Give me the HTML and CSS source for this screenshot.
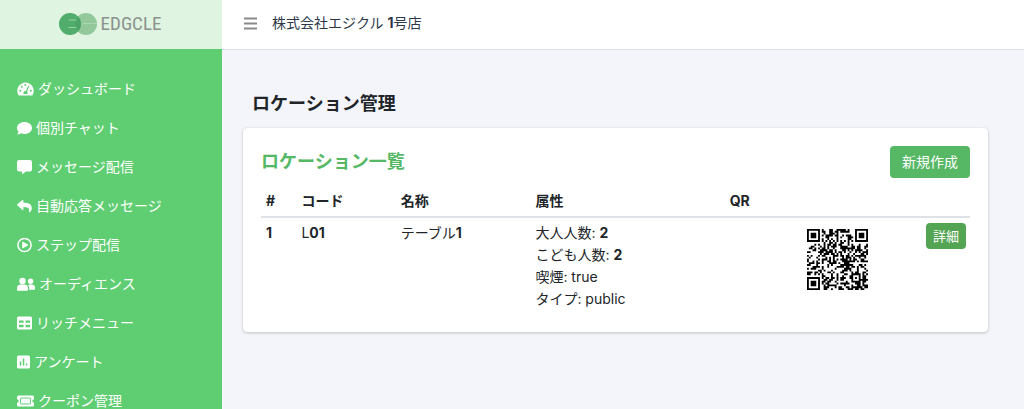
FILE: index.html
```html
<!DOCTYPE html>
<html lang="ja">
<head>
<meta charset="utf-8">
<meta name="viewport" content="width=device-width, initial-scale=1">
<title>ロケーション管理</title>
<link rel="stylesheet" href="styles.css">
</head>
<body>
<div class="app">
  <aside class="sidebar">
    <a class="brand" href="#" aria-label="EDGCLE">
      <svg class="brand-mark" viewBox="0 0 40 24" aria-hidden="true">
        <circle cx="28" cy="12" r="11" fill="#93c89b"/>
        <circle cx="12" cy="12" r="11" fill="#50ad6b"/>
        <path d="M20 4.500A11 11 0 0 1 20 19.500A11 11 0 0 1 20 4.500Z" fill="#4ba467"/>
        <path d="M10.500 8h8M10.500 15.500h8M25 11.500h14" stroke="#b4dfbc" stroke-width=".7" fill="none"/>
      </svg>
      <span class="brand-name">EDGCLE</span>
    </a>
    <nav class="menu">
      <a class="menu-item" href="#"><svg class="icon w17" viewBox="0 0 17 16"><path fill="#fff" d="M8.500 1.500A8.300 8.300 0 0 0 1.400 14q.3.500.9.500h12.400q.6 0 .9-.5A8.300 8.300 0 0 0 8.500 1.500Z"/><g fill="#5fcd72"><circle cx="8.300" cy="4" r="1"/><circle cx="4.600" cy="5.800" r="1"/><circle cx="3.200" cy="9.800" r="1"/><circle cx="13.800" cy="9.800" r="1"/><path d="m11.400 4.400 1 .4-2.300 5.600a2 2 0 0 1 .2 2.600H6.700a2 2 0 0 1 2.200-3Z"/></g></svg>ダッシュボード</a>
      <a class="menu-item" href="#"><svg class="icon w15" viewBox="0 0 15 16"><path fill="#fff" d="M7.500 2C3.400 2 0 4.600 0 8c0 1.400.6 2.700 1.600 3.700C1.400 12.700.8 13.500.1 14.200c0 .3.100.4.400.3 1.500-.1 2.800-.6 3.800-1.200 1 .4 2.100.6 3.200.6 4.100 0 7.500-2.600 7.500-6S11.600 2 7.500 2Z"/></svg>個別チャット</a>
      <a class="menu-item" href="#"><svg class="icon w15" viewBox="0 0 15 16"><path fill="#fff" d="M2 1h11a2 2 0 0 1 2 2v7.500a2 2 0 0 1-2 2H9L5.600 15q-.6.400-.6-.3v-2.200H2a2 2 0 0 1-2-2V3a2 2 0 0 1 2-2Z"/></svg>メッセージ配信</a>
      <a class="menu-item" href="#"><svg class="icon w15" viewBox="0 0 15 16"><path fill="#fff" d="M.3 6.300 5.400 2c.4-.4 1-.1 1 .4v2.300c4.700.1 8.400 1 8.400 5.500 0 1.800-1 3.300-2.300 4.100-.4.300-.9 0-.7-.5 1.200-3.600-.5-4.700-5.400-4.800v2.500c0 .6-.6.900-1 .5L.3 7.300q-.5-.5 0-1Z"/></svg>自動応答メッセージ</a>
      <a class="menu-item" href="#"><svg class="icon w15" viewBox="0 0 15 16"><circle cx="7.500" cy="8" r="6.600" fill="none" stroke="#fff" stroke-width="1.500"/><path fill="#fff" d="M5.200 5.200q0-.8.700-.5l5 2.800q.7.500 0 1l-5 2.800q-.7.300-.7-.5Z"/></svg>ステップ配信</a>
      <a class="menu-item" href="#"><svg class="icon w18" viewBox="0 0 18 16"><g fill="#fff"><circle cx="5.500" cy="5" r="3.200"/><path d="M0 14v-1.500a4 4 0 0 1 4-4h3a4 4 0 0 1 4 4V14q0 .7-.7.700H.7Q0 14.700 0 14Z"/><circle cx="13.600" cy="5.200" r="2.700"/><path d="M11 8.900q.8-.5 2-.4h1.600A3.400 3.400 0 0 1 18 12v1q0 .8-.8.800h-5V12.300q0-2-1.200-3.400Z"/></g></svg>オーディエンス</a>
      <a class="menu-item" href="#"><svg class="icon w15" viewBox="0 0 15 16"><path fill="#fff" fill-rule="evenodd" d="M1.500 1.500h12A1.500 1.500 0 0 1 15 3v10a1.500 1.500 0 0 1-1.500 1.500h-12A1.500 1.500 0 0 1 0 13V3a1.500 1.500 0 0 1 1.500-1.500ZM2 5.500v2.300h4.600V5.500Zm6.500 0v2.300H13V5.500ZM2 9.800v2.400h4.600V9.800Zm6.500 0v2.400H13V9.800Z"/></svg>リッチメニュー</a>
      <a class="menu-item" href="#"><svg class="icon w13" viewBox="0 0 13 16"><path fill="#fff" fill-rule="evenodd" d="M1.500 1.500h10A1.500 1.500 0 0 1 13 3v10a1.500 1.500 0 0 1-1.500 1.500h-10A1.500 1.500 0 0 1 0 13V3a1.500 1.500 0 0 1 1.500-1.500ZM2.800 7.500v4h1.500v-4Zm3-3v7h1.500v-7Zm3 5v2h1.500v-2Z"/></svg>アンケート</a>
      <a class="menu-item" href="#"><svg class="icon w17" viewBox="0 0 17 16"><path fill="#fff" d="M1.500 2.500h14A1.500 1.500 0 0 1 17 4v2.300a1.700 1.700 0 0 0 0 3.400V12a1.500 1.500 0 0 1-1.500 1.500h-14A1.500 1.500 0 0 1 0 12V9.700a1.700 1.700 0 0 0 0-3.400V4a1.500 1.500 0 0 1 1.500-1.500Z"/><rect x="3.600" y="5" width="9.800" height="6" rx=".5" fill="none" stroke="#5fcd72" stroke-width="1"/></svg>クーポン管理</a>
    </nav>
  </aside>
  <div class="content">
    <header class="topbar">
      <button class="toggle" type="button" aria-label="メニュー"><svg class="bars" viewBox="0 0 13 13"><path d="M0 1.500h13M0 6.500h13M0 11.500h13" stroke="#8a8a8a" stroke-width="2"/></svg></button>
      <span class="store">株式会社エジクル <b>1</b>号店</span>
    </header>
    <main class="page">
      <h1 class="page-title">ロケーション管理</h1>
      <section class="card">
        <div class="card-head">
          <h2 class="card-title">ロケーション一覧</h2>
          <button class="btn" type="button">新規作成</button>
        </div>
        <table class="list">
          <thead>
            <tr><th class="c-num">#</th><th class="c-code">コード</th><th class="c-name">名称</th><th class="c-attr">属性</th><th class="c-qr">QR</th><th class="c-act"></th></tr>
          </thead>
          <tbody>
            <tr>
              <td><b>1</b></td>
              <td>L<b>01</b></td>
              <td>テーブル<b>1</b></td>
              <td>大人人数: <b>2</b><br>こども人数: <b>2</b><br>喫煙: true<br>タイプ: public</td>
              <td class="qr-cell"><svg class="qr" viewBox="0 0 33 33" role="img" aria-label="QR"><path id="qr-modules"/></svg></td>
              <td class="act-cell"><button class="btn btn-small" type="button">詳細</button></td>
            </tr>
          </tbody>
        </table>
      </section>
    </main>
  </div>
</div>
<script src="qr.js"></script>
</body>
</html>
```

FILE: styles.css
```css
* { box-sizing: border-box; }

body {
  margin: 0;
  background: #f4f5fa;
  color: #212529;
  font: 14px/22px Inter, "Noto Sans CJK JP", sans-serif;
}

.app { display: flex; height: 100vh; overflow: hidden; }

.sidebar { flex: 0 0 222px; background: #5fcd72; }

.brand {
  display: flex;
  align-items: center;
  justify-content: center;
  gap: 3px;
  height: 49px;
  padding: 0 3px 1px 0;
  background: #dff4e1;
  color: #8b918d;
  text-decoration: none;
}
.brand-mark { width: 40px; height: 24px; }
.brand-name { font: 19px/24px "Roboto Condensed", "Liberation Sans Narrow", Roboto, sans-serif; }

.menu { display: flex; flex-direction: column; padding: 20px 17px; }
.menu-item {
  display: flex;
  align-items: center;
  gap: 4px;
  height: 39px;
  flex: none;
  color: #fff;
  text-decoration: none;
  white-space: nowrap;
}
.icon { height: 16px; flex: none; }
.w13 { width: 13px; }
.w15 { width: 15px; }
.w17 { width: 17px; }
.w18 { width: 18px; }

.content { flex: 1; min-width: 0; }

.topbar {
  display: flex;
  align-items: center;
  gap: 15px;
  height: 50px;
  padding: 0 22px 3px;
  background: #fff;
  border-bottom: 1px solid #dcdfe4;
  color: #2c3848;
}
.toggle { display: flex; padding: 0; border: 0; background: none; }
.bars { width: 13px; height: 13px; }

.page { padding: 41px 36px 0 21px; }
.page-title { margin: 0 9px 12px; font-size: 18px; line-height: 25px; font-weight: 700; }

.card {
  padding: 18px 18px 17px;
  background: #fff;
  border-radius: 4px;
  box-shadow: 0 0 1px rgba(0, 0, 0, .15), 0 1px 3px rgba(0, 0, 0, .2);
}
.card-head { display: flex; justify-content: space-between; align-items: center; }
.card-title { margin: 0; font-size: 18px; font-weight: 700; color: #54b865; }

.btn {
  padding: 5px 12px;
  border: 0;
  border-radius: 4px;
  background: #56b865;
  color: #fff;
  font: inherit;
  white-space: nowrap;
}
.btn-small { padding: 3px 7px; background: #54a553; font-size: 13px; line-height: 20px; }

.list { width: 100%; border-collapse: collapse; table-layout: fixed; }
.list th { padding: 12px 5px 4px; border-bottom: 2px solid #dee2e6; text-align: left; }
.list td { padding: 4px 5px 5px; vertical-align: top; }
.c-num { width: 5%; }
.c-code { width: 14%; }
.c-name { width: 19%; }
.c-attr { width: 27.4%; }
.c-act { width: 7%; }
.list .qr-cell { padding: 11px 52px 0; text-align: right; }
.list .act-cell { padding: 5px 4px; text-align: right; }
.qr { display: inline-block; width: 61px; height: 61px; vertical-align: top; }
```

FILE: qr.js
```js
// Builds the module grid of a 33x33 code as a single path.
const size = 33;
let seed = 41;
function next() {
  seed = (seed * 1103515245 + 12345) % 2147483648;
  return seed / 2147483648;
}
function ring(x, y, cx, cy) {
  return Math.max(Math.abs(x - cx), Math.abs(y - cy));
}
function isDark(x, y) {
  const noise = next() < 0.5;
  for (const [cx, cy] of [[3, 3], [29, 3], [3, 29]]) {
    const r = ring(x, y, cx, cy);
    if (r <= 4) return r !== 2 && r !== 4;
  }
  const a = ring(x, y, 26, 26);
  if (a <= 2) return a !== 1;
  if (x === 6) return y % 2 === 0;
  if (y === 6) return x % 2 === 0;
  return noise;
}
let d = "";
for (let y = 0; y < size; y++) {
  for (let x = 0; x < size; x++) {
    if (isDark(x, y)) d += `M${x} ${y}h1v1h-1z`;
  }
}
document.getElementById("qr-modules").setAttribute("d", d);
```
